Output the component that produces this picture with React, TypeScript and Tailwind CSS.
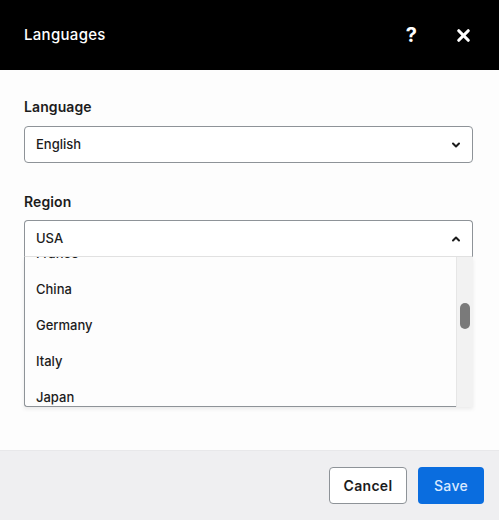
import { ChevronDown, ChevronUp, X } from "lucide-react";

const regions = ["USA", "Canada", "France", "China", "Germany", "Italy", "Japan", "Mexico", "Spain"];

export default function App() {
  return (
    <div className="flex h-[520px] w-[499px] flex-col bg-[#fdfdfd] font-['Inter',sans-serif] text-[#1c1c1c]">
      <div className="flex h-[70px] shrink-0 items-center bg-black pl-6 pr-[26px] text-white">
        <h1 className="flex-1 pt-px text-[15px] font-medium tracking-[0.3px]">Languages</h1>
        <span className="mr-[37px] text-[20px] font-bold leading-none">?</span>
        <X size={19} strokeWidth={4} />
      </div>

      <div className="flex flex-1 flex-col pl-6 pr-[26px] pt-[26px]">
        <label className="text-[14px] font-semibold leading-[22px] tracking-[0.1px]">Language</label>
        <div className="mt-[8px] flex h-[37px] items-center rounded-[4px] border border-[#8e9398] bg-white pl-[11px] pr-[10px] text-[13px] font-medium">
          <span className="flex-1 pt-px">English</span>
          <ChevronDown size={12} strokeWidth={4} />
        </div>

        <label className="mt-[28px] text-[14px] font-semibold leading-[22px] tracking-[0.1px]">Region</label>
        <div className="relative mt-[7px]">
          <div className="flex h-[37px] items-center rounded-t-[4px] border border-b-[#e3e3e3] border-[#8e9398] bg-white pl-[11px] pr-[10px] text-[13px] font-medium">
            <span className="flex-1 pt-px">USA</span>
            <ChevronUp size={12} strokeWidth={4} />
          </div>
          <div className="flex h-[150px] shadow-[0_2px_4px_rgba(0,0,0,0.08)]">
            <div className="flex-1 overflow-hidden rounded-bl-[3px] border-b border-l border-[#8e9398] bg-[#fdfdfd]">
              <div className="-mt-[93px]">
                {regions.map((r) => (
                  <div key={r} className="flex h-9 items-center pl-[11px] text-[13px] font-medium">
                    {r}
                  </div>
                ))}
              </div>
            </div>
            <div className="w-[17px] border-l border-[#e6e6e6] bg-[#f2f2f2] pt-[46px]">
              <div className="mx-auto h-[26px] w-[10px] rounded-full bg-[#7a7a7a]" />
            </div>
          </div>
        </div>
      </div>

      <div className="flex h-[70px] shrink-0 items-center justify-end gap-[11px] border-t border-[#e8e8ea] bg-[#efeff1] pr-[15px]">
        <button className="h-[37px] w-[78px] rounded-[4px] border border-[#8e9398] bg-white text-[14px] font-semibold tracking-[0.3px] text-[#1c1c1c]">
          Cancel
        </button>
        <button className="h-[37px] w-[66px] rounded-[4px] bg-[#0a6ddf] text-[14px] font-medium tracking-[0.3px] text-[#d9e9ff]">
          Save
        </button>
      </div>
    </div>
  );
}
